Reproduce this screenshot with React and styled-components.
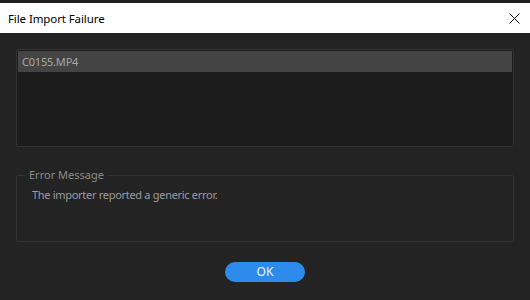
import React from "react";
import styled, { createGlobalStyle } from "styled-components";

const Global = createGlobalStyle`
  html, body { margin: 0; padding: 0; background: #232323; }
  body { font-family: "Noto Sans", "Open Sans", sans-serif; }
`;

const Window = styled.div`
  width: 530px;
  height: 300px;
  background: #232323;
  border-top: 3px solid #1f1f1f;
  box-sizing: border-box;
  display: flex;
  flex-direction: column;
`;

const TitleBar = styled.div`
  height: 30px;
  background: #ffffff;
  display: flex;
  align-items: center;
  justify-content: space-between;
  padding: 0 10px 0 8px;
  flex-shrink: 0;
`;

const Title = styled.span`
  font-size: 11.5px;
  color: #000;
  letter-spacing: -0.1px;
`;

const CloseButton = styled.button`
  border: none;
  background: transparent;
  padding: 0;
  width: 11px;
  height: 11px;
  display: flex;
  margin-top: 1px;
`;

const Body = styled.div`
  flex: 1;
  display: flex;
  flex-direction: column;
  padding: 16px 16px 0 16px;
`;

const FileList = styled.div`
  height: 98px;
  background: #1c1c1c;
  border: 1px solid #333333;
  border-radius: 2px;
  box-sizing: border-box;
  padding: 1px 1px;
`;

const FileRow = styled.div`
  height: 21px;
  background: ${(p) => (p.$selected ? "#444444" : "transparent")};
  color: #a8a8a8;
  font-size: 11px;
  letter-spacing: -0.2px;
  display: flex;
  align-items: center;
  padding-left: 4px;
`;

const Fieldset = styled.fieldset`
  margin: 21px 0 0 0;
  height: 74px;
  box-sizing: border-box;
  border: 1px solid #333333;
  border-radius: 2px;
  padding: 0 0 0 15px;
`;

const Legend = styled.legend`
  color: #8c8c8c;
  font-size: 11px;
  padding: 0 4px;
  margin-left: -7px;
  line-height: 14px;
`;

const ErrorText = styled.div`
  color: #9a9aa2;
  font-size: 11px;
  letter-spacing: -0.3px;
  margin-top: 5px;
`;

const Footer = styled.div`
  display: flex;
  justify-content: center;
  padding-top: 20px;
`;

const OkButton = styled.button`
  width: 80px;
  height: 20px;
  border: none;
  border-radius: 10px;
  background: #2d8ceb;
  color: #f0f6ff;
  font-family: "Noto Sans", sans-serif;
  font-size: 12px;
  padding: 0;
  line-height: 20px;
`;

export default function App() {
  return (
    <>
      <Global />
      <Window>
        <TitleBar>
          <Title>File Import Failure</Title>
          <CloseButton aria-label="Close">
            <svg width="11" height="11" viewBox="0 0 11 11">
              <path d="M0.5 0.5 L10.5 10.5 M10.5 0.5 L0.5 10.5" stroke="#000" strokeWidth="1" />
            </svg>
          </CloseButton>
        </TitleBar>
        <Body>
          <FileList>
            <FileRow $selected>C0155.MP4</FileRow>
          </FileList>
          <Fieldset>
            <Legend>Error Message</Legend>
            <ErrorText>The importer reported a generic error.</ErrorText>
          </Fieldset>
          <Footer>
            <OkButton>OK</OkButton>
          </Footer>
        </Body>
      </Window>
    </>
  );
}
